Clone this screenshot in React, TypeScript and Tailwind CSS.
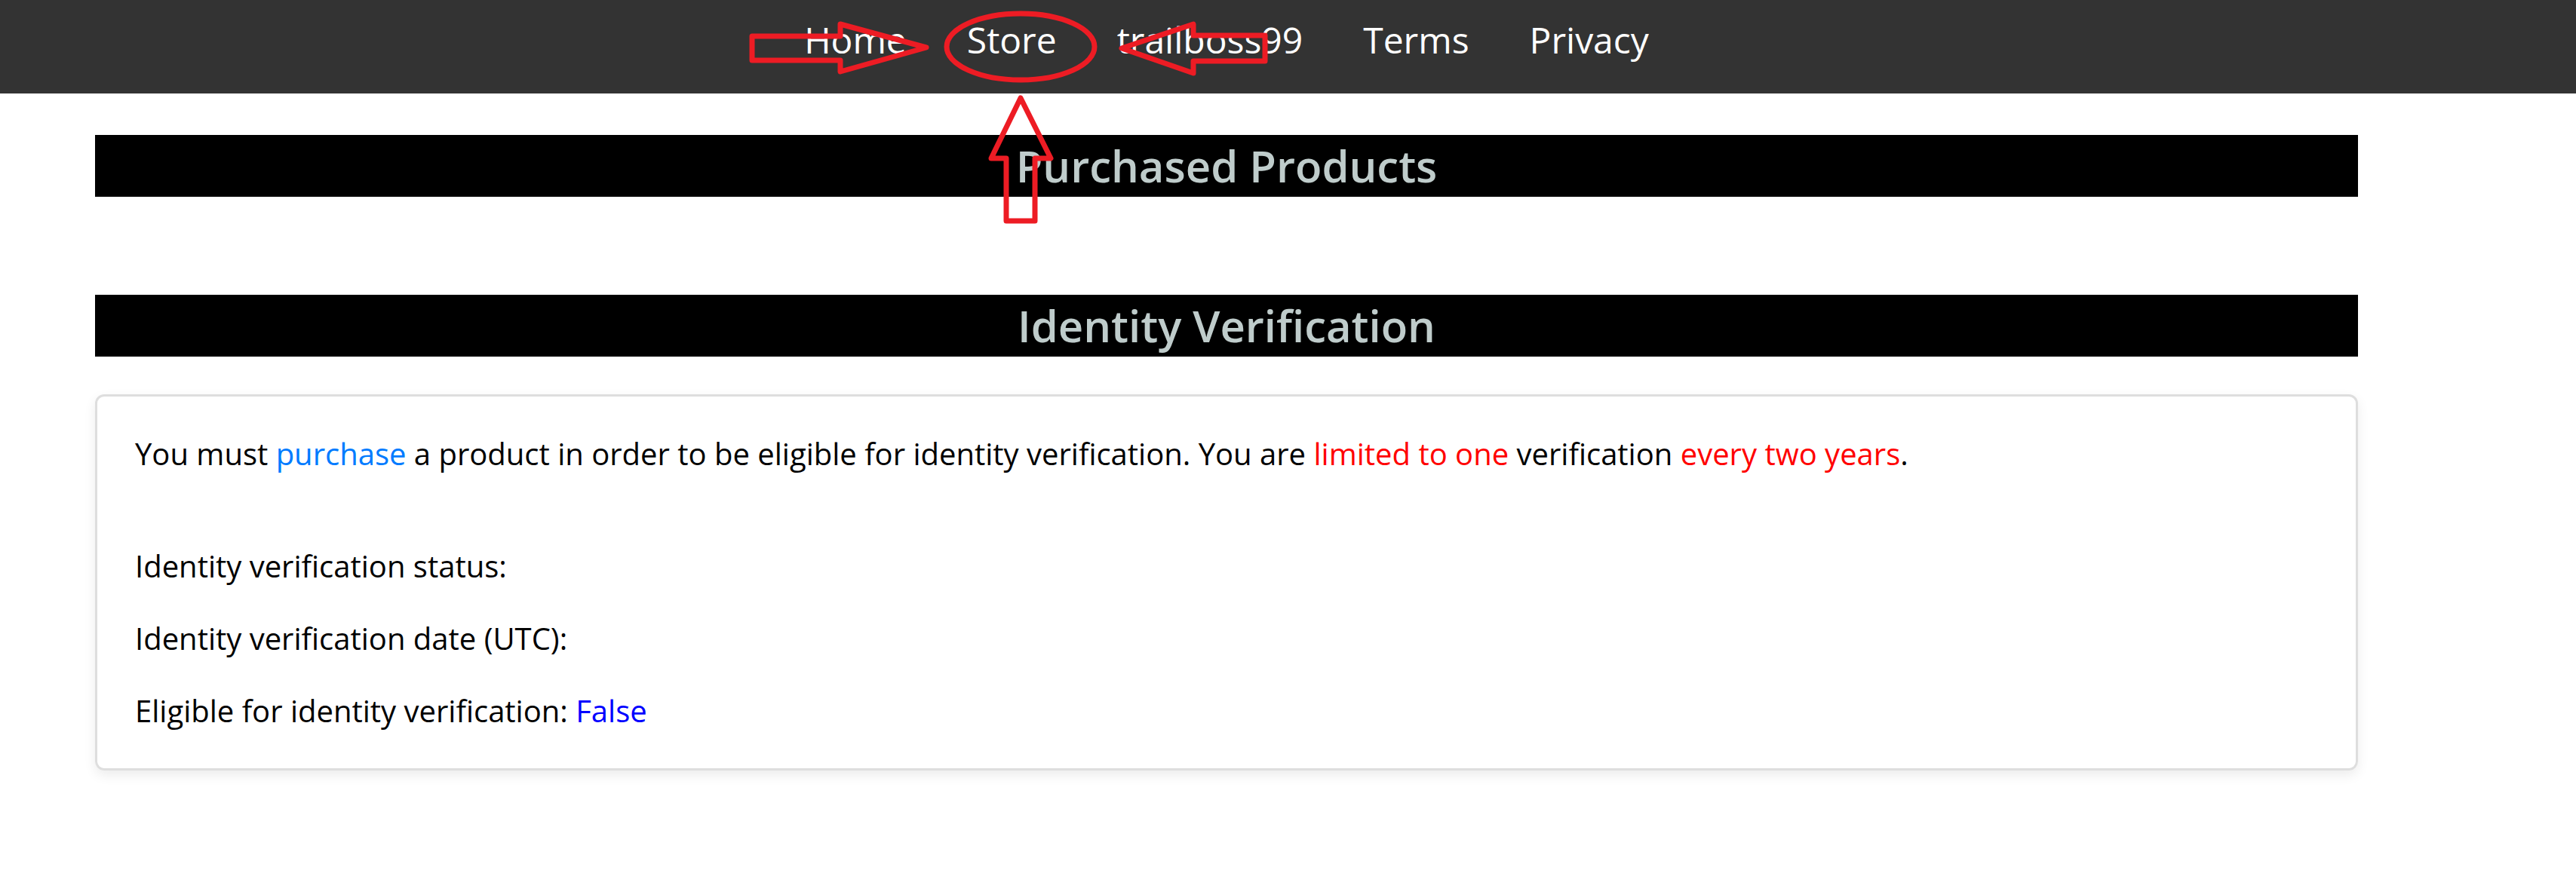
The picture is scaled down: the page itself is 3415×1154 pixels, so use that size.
import React from "react";

const navItems = ["Home", "Store", "trailboss99", "Terms", "Privacy"];

function Annotations() {
  // red markup drawn over the screenshot
  return (
    <svg
      className="pointer-events-none absolute left-0 top-0"
      width={3415}
      height={320}
      viewBox="0 0 3415 320"
      fill="none"
      stroke="#ed1c24"
      strokeWidth={7}
      strokeLinejoin="round"
    >
      <polygon points="997,48 1114,48 1114,32 1228,63 1114,95 1114,80 997,80" />
      <ellipse cx={1353} cy={62} rx={98} ry={44} />
      <polygon points="1487,64 1582,32 1582,47 1677,47 1677,81 1582,81 1582,97" />
      <polygon points="1353,130 1393,210 1372,210 1372,293 1334,293 1334,210 1314,210" />
    </svg>
  );
}

function SectionTitle({ children }: { children: React.ReactNode }) {
  return (
    <h2 className="flex h-[82px] items-center justify-center bg-black text-[58px] font-semibold leading-none text-[#bfcccb]">
      {children}
    </h2>
  );
}

export default function App() {
  return (
    <div className="relative min-h-screen bg-white font-['Open_Sans',sans-serif] text-black">
      <nav className="h-[124px] bg-[#333333]">
        <ul className="ml-[126px] flex h-full w-[3000px] items-center justify-center pb-[18px]">
          {navItems.map((item) => (
            <li key={item} className="px-[40px] text-[48px] leading-none text-white">
              {item}
            </li>
          ))}
        </ul>
      </nav>

      <main className="ml-[126px] w-[3000px] pt-[55px]">
        <SectionTitle>Purchased Products</SectionTitle>
        <div className="h-[130px]" />
        <SectionTitle>Identity Verification</SectionTitle>

        <div className="mt-[50px] h-[499px] rounded-[12px] border-[3px] border-[#dedede] px-[50px] pt-[46px] shadow-[0_6px_16px_rgba(0,0,0,0.08)]">
          <p className="mb-[89px] text-[40px] leading-[60px]">
            You must <span className="text-[#007bff]">purchase</span> a product in order to be eligible for identity
            verification. You are <span className="text-[#ff0000]">limited to one</span> verification{" "}
            <span className="text-[#ff0000]">every two years</span>.
          </p>
          <p className="mb-[36px] text-[40px] leading-[60px]">Identity verification status:</p>
          <p className="mb-[36px] text-[40px] leading-[60px]">Identity verification date (UTC):</p>
          <p className="text-[40px] leading-[60px]">
            Eligible for identity verification: <span className="text-[#0000ff]">False</span>
          </p>
        </div>
      </main>

      <Annotations />
    </div>
  );
}
